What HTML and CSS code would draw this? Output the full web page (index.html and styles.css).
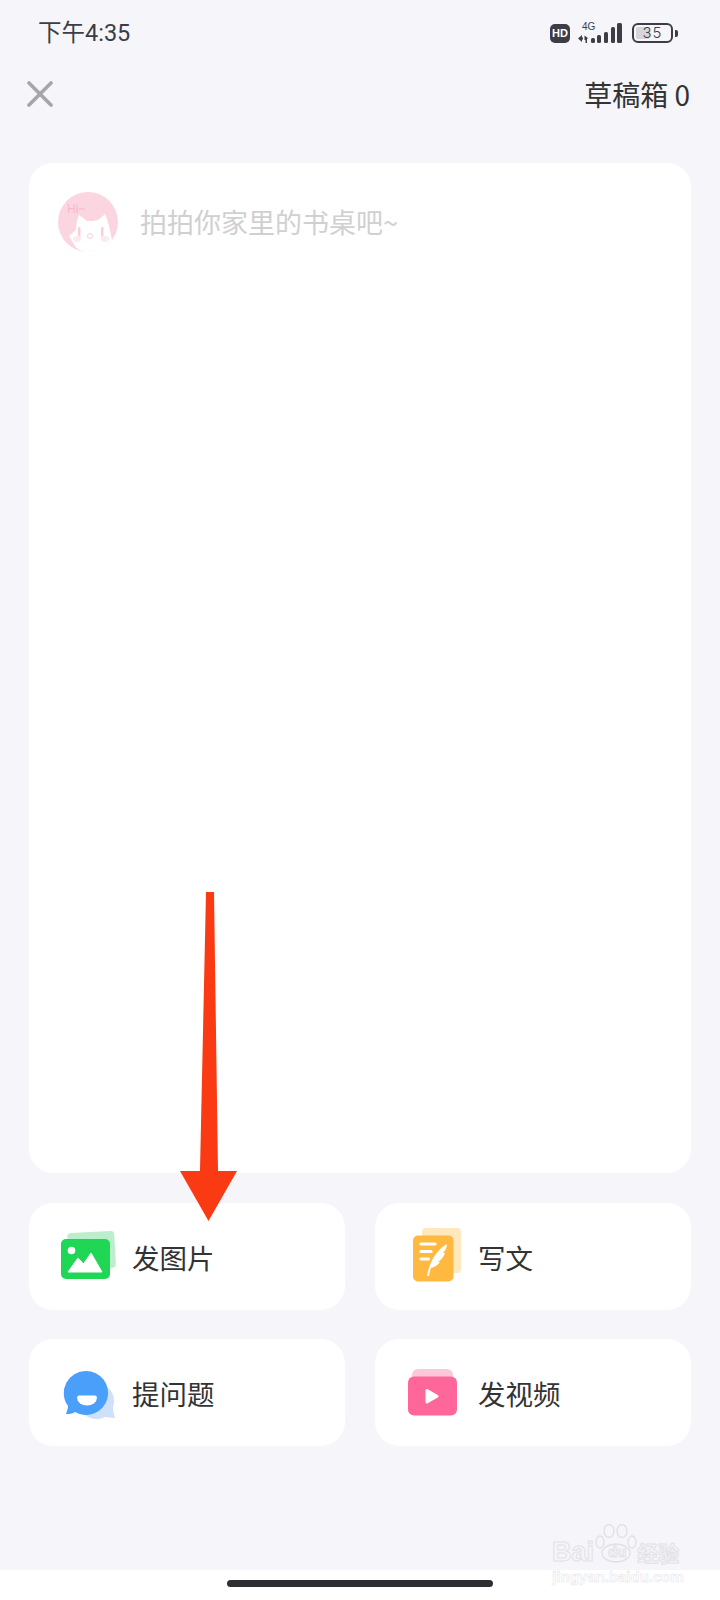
FILE: index.html
```html
<!DOCTYPE html>
<html lang="zh-CN">
<head>
  <meta charset="UTF-8" />
  <meta name="viewport" content="width=device-width, initial-scale=1.0"/>
  <title>发布</title>
  <link rel="stylesheet" href="styles.css">
</head>
<body>
  <div class="page">
    <!-- status bar -->
    <div class="status-bar">
      <span class="time">下午4:35</span>
      <div class="status-icons">
        <span class="hd">HD</span>
        <div class="network">
          <span class="net-label">4G</span>
          <svg class="signal" width="45" height="21" viewBox="0 0 45 21">
            <path d="M0 15.500L4 12V14.500H5V16.500H4V19zM6.500 12.500L10.500 15.500H9V20H7.500V17H6.500z" fill="#3d3d45"/>
            <rect x="13" y="15" width="4" height="5" rx="1.500" fill="#3d3d45"/>
            <rect x="19" y="12" width="4" height="8" rx="1.500" fill="#3d3d45"/>
            <rect x="26" y="9" width="4" height="11" rx="1.500" fill="#3d3d45"/>
            <rect x="33" y="4" width="4" height="16" rx="1.500" fill="#3d3d45"/>
            <rect x="39" y="0" width="5" height="20" rx="1.500" fill="#3d3d45"/>
          </svg>
        </div>
        <div class="battery">
          <div class="battery-body">
            <div class="battery-level"></div>
            <span class="battery-num">35</span>
          </div>
          <div class="battery-cap"></div>
        </div>
      </div>
    </div>

    <!-- header -->
    <div class="top-bar">
      <svg width="26" height="26" viewBox="0 0 26 26">
        <path d="M2 2l22 22M24 2L2 24" stroke="#a6a6aa" stroke-width="3.600" stroke-linecap="round"/>
      </svg>
      <span class="drafts">草稿箱 0</span>
    </div>

    <!-- editor card -->
    <div class="editor-card">
      <div class="prompt">
        <svg class="avatar" width="60" height="60" viewBox="0 0 60 60">
          <circle cx="30" cy="30" r="30" fill="#fbd6e1"/>
          <text x="9" y="21" class="avatar-hi">Hi~</text>
          <path d="M11 44L18 38C18 32 19 27 21 23L29 29C33 29 37 29 40 28L47 22C50 28 52 38 54 48C46 58 38 60 30 60C24 60 20 58 17 54z" fill="#fff"/>
          <rect x="20" y="35" width="2.500" height="10" rx="1.200" fill="#f8cfdb"/>
          <rect x="43" y="35" width="2.500" height="10" rx="1.200" fill="#f8cfdb"/>
          <ellipse cx="19" cy="47" rx="4" ry="3" fill="#fdeaf0"/>
          <ellipse cx="47" cy="47" rx="4" ry="3" fill="#fdeaf0"/>
          <circle cx="32" cy="44" r="2.500" fill="none" stroke="#f8cfdb" stroke-width="1"/>
        </svg>
        <span class="prompt-text">拍拍你家里的书桌吧~</span>
      </div>
    </div>

    <!-- post types -->
    <div class="actions">
      <div class="action">
        <svg class="action-icon" width="60" height="56" viewBox="0 0 60 56">
          <rect x="8" y="3" width="47" height="37" rx="4" fill="#bdeecb" transform="rotate(-3 30 20)"/>
          <rect x="1" y="10" width="49" height="40" rx="5" fill="#1fd655"/>
          <circle cx="11.500" cy="21.500" r="3.800" fill="#fff"/>
          <path d="M8 43L18 29L23.500 35L31 24L42 43z" fill="#fff" stroke="#fff" stroke-width="1" stroke-linejoin="round"/>
        </svg>
        <span>发图片</span>
      </div>
      <div class="action">
        <svg class="action-icon" width="60" height="56" viewBox="0 0 60 56">
          <rect x="16" y="-1" width="39" height="45" rx="4" fill="#ffe8bd"/>
          <rect x="7" y="6.500" width="40.500" height="46" rx="5" fill="#ffb940"/>
          <path d="M15 15h14M15 22.500h10M15 30h7.500" stroke="#fff" stroke-width="3.200" stroke-linecap="round"/>
          <path d="M21 47C23 35 29 22 41 15C41 19 39 22 37 24L39 24C37 29 35 31 32 33L34 33C31 37 28 38 25 39C24 42 23.500 44 23 47z" fill="#fff"/>
        </svg>
        <span>写文</span>
      </div>
      <div class="action">
        <svg class="action-icon" width="60" height="56" viewBox="0 0 60 56">
          <path d="M36 18a18 18 0 0 1 17 24c0 4 1 8 2 11l-10-1a18 18 0 1 1-9-34z" fill="#cfe0fb"/>
          <path d="M26 6a22 22 0 1 1-11 41c-3 2-6 2-9 2c1-3 2-6 2-8a22 22 0 0 1 18-35z" fill="#4a9ffa"/>
          <path d="M19 30.500h16c1 0 2 1 2 2a10 8 0 0 1-20 0c0-1 1-2 2-2z" fill="#fff"/>
        </svg>
        <span>提问题</span>
      </div>
      <div class="action">
        <svg class="action-icon" width="60" height="56" viewBox="0 0 60 56">
          <rect x="6" y="4" width="41" height="24" rx="6" fill="#fdc7da"/>
          <rect x="2" y="11.500" width="49" height="39" rx="6" fill="#ff6699"/>
          <path d="M21 25.500v11.500l10-5.700z" fill="#fff" stroke="#fff" stroke-width="3" stroke-linejoin="round"/>
        </svg>
        <span>发视频</span>
      </div>
    </div>

    <div class="spacer"></div>

    <div class="home-area">
      <div class="home-bar"></div>
    </div>

    <!-- annotation arrow drawn over the page -->
    <svg class="arrow" width="60" height="330" viewBox="0 0 60 330">
      <path d="M26 0h8l4 279h19L28.500 329L0 279h20z" fill="#f93a12"/>
    </svg>

    <!-- watermark -->
    <div class="watermark">
      <svg class="paw" width="44" height="42" viewBox="0 0 44 42">
        <g fill="none" stroke="#e0e0e4" stroke-width="1.300">
          <ellipse cx="14" cy="7" rx="5" ry="6.500"/>
          <ellipse cx="27" cy="7" rx="5" ry="6.500"/>
          <ellipse cx="5" cy="18" rx="4" ry="6"/>
          <ellipse cx="37" cy="18" rx="4" ry="6"/>
          <ellipse cx="21" cy="29" rx="14" ry="9"/>
        </g>
      </svg>
      <div class="wm-logo"><span>Bai</span><span class="wm-du">du</span><span class="wm-jy">经验</span></div>
      <div class="wm-url">jingyan.baidu.com</div>
    </div>
  </div>
</body>
</html>
```

FILE: styles.css
```css
* {
  box-sizing: border-box;
}

body {
  margin: 0;
  font-family: "Noto Sans CJK SC", "Noto Sans", sans-serif;
  color: #333;
  background-color: #f5f5fa;
}

.page {
  position: relative;
  display: flex;
  flex-direction: column;
  width: 720px;
  height: 1600px;
  overflow: hidden;
}

.status-bar {
  display: flex;
  justify-content: space-between;
  align-items: center;
  height: 66px;
  padding: 0 42px 0 38px;
}

.time {
  font-family: Roboto, "Noto Sans CJK SC", sans-serif;
  font-size: 23.500px;
  line-height: 30px;
  color: #3d3d45;
}

.status-icons {
  display: flex;
  align-items: center;
}

.hd {
  width: 20px;
  height: 19px;
  border-radius: 5px;
  background-color: #3d3d45;
  color: #fff;
  font-family: "Liberation Sans", sans-serif;
  font-size: 11px;
  font-weight: 700;
  line-height: 19px;
  text-align: center;
}

.network {
  position: relative;
  width: 45px;
  height: 21px;
  margin-left: 8px;
}

.net-label {
  position: absolute;
  top: -2px;
  left: 4px;
  font-family: "Liberation Sans", sans-serif;
  font-size: 10px;
  line-height: 11px;
  color: #3d3d45;
}

.signal {
  display: block;
}

.battery {
  display: flex;
  align-items: center;
  gap: 2px;
  margin-left: 9px;
}

.battery-body {
  position: relative;
  width: 41px;
  height: 20px;
  padding: 2px;
  border: 2.500px solid #3d3d45;
  border-radius: 6px;
}

.battery-level {
  width: 14px;
  height: 100%;
  border-radius: 2px;
  background-color: #d6d6da;
}

.battery-num {
  position: absolute;
  top: 0;
  left: 0;
  width: 100%;
  font-family: Inter, sans-serif;
  font-size: 15px;
  font-weight: 300;
  letter-spacing: 1px;
  line-height: 15px;
  text-align: center;
  color: #3d3d45;
}

.battery-cap {
  width: 3px;
  height: 7px;
  border-radius: 0 2px 2px 0;
  background-color: #3d3d45;
}

.top-bar {
  display: flex;
  justify-content: space-between;
  align-items: center;
  height: 56px;
  padding: 0 30px 0 27px;
}

.drafts {
  font-size: 28px;
  line-height: 36px;
  color: #333;
}

.editor-card {
  height: 1010px;
  margin: 41px 29px 0;
  padding: 29px;
  border-radius: 24px;
  background-color: #fff;
}

.prompt {
  display: flex;
  align-items: center;
  gap: 22px;
}

.avatar-hi {
  font-family: "Liberation Sans", sans-serif;
  font-size: 12px;
  fill: #f5b9cb;
}

.prompt-text {
  font-size: 27px;
  line-height: 36px;
  color: #d0d0d2;
}

.actions {
  display: grid;
  grid-template-columns: 316px 316px;
  grid-auto-rows: 107px;
  gap: 29px 30px;
  margin: 30px 29px 0;
}

.action {
  display: flex;
  align-items: center;
  gap: 12px;
  padding-left: 31px;
  border-radius: 24px;
  background-color: #fff;
  font-size: 27.500px;
  color: #333;
}

.action-icon {
  flex: none;
  overflow: visible;
}

.spacer {
  flex: 1;
}

.home-area {
  display: flex;
  justify-content: center;
  height: 30px;
  padding-top: 10px;
  background-color: #fff;
}

.home-bar {
  width: 266px;
  height: 7px;
  border-radius: 4px;
  background-color: #2f2f33;
}

.arrow {
  position: absolute;
  top: 892px;
  left: 180px;
}

.watermark {
  position: absolute;
  top: 1524px;
  left: 552px;
  width: 132px;
  padding-top: 14px;
  color: #f6f6f9;
  text-align: center;
}

.paw {
  position: absolute;
  top: 0;
  left: 43px;
}

.wm-logo {
  position: relative;
  display: flex;
  align-items: center;
  font-family: "Liberation Sans", sans-serif;
  font-size: 27px;
  font-weight: 700;
  line-height: 28px;
  -webkit-text-stroke: 1px #e2e2e6;
}

.wm-du {
  margin-left: 14px;
  font-size: 15px;
}

.wm-jy {
  margin-left: 11px;
  font-family: "Noto Sans CJK SC", sans-serif;
  font-size: 21px;
}

.wm-url {
  margin-top: 2px;
  font-family: "Liberation Sans", sans-serif;
  font-size: 15px;
  font-weight: 700;
  line-height: 18px;
  -webkit-text-stroke: 0.500px #e4e4e8;
  color: #fff;
}
```
